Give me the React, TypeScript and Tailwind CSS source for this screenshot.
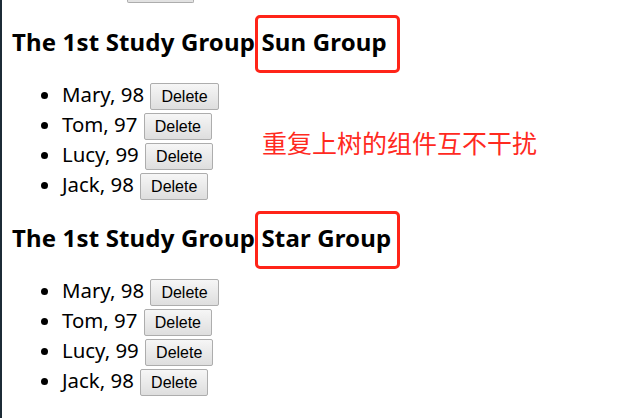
import React from 'react';

type Student = { name: string; score: number };

const students: Student[] = [
  { name: 'Mary', score: 98 },
  { name: 'Tom', score: 97 },
  { name: 'Lucy', score: 99 },
  { name: 'Jack', score: 98 },
];

function DeleteButton() {
  return (
    <button className="inline-block h-[27px] ml-[1px] px-[10px] align-middle border border-[#adadad] rounded-[2px] bg-gradient-to-b from-[#f6f6f6] to-[#dedede] text-[16px] leading-[25px] text-black font-['Liberation_Sans',Arial,sans-serif]">
      Delete
    </button>
  );
}

function StudyGroup({ name }: { name: string }) {
  return (
    <div>
      <h2 className="text-[24px] leading-[36px] font-bold tracking-[0.15px] text-black">
        The 1st Study Group{' '}
        <span className="relative">
          {name}
          {/* annotation box */}
          <span className="absolute left-[-6px] top-[-10px] w-[145px] h-[58px] border-[3px] border-[#ff2418] rounded-[5px]"></span>
        </span>
      </h2>
      <ul className="list-disc pl-[50px] mt-[19px] text-[20.4px] leading-[30px] text-black">
        {students.map((s) => (
          <li key={s.name} className="h-[30px]">
            {s.name}, {s.score} <DeleteButton />
          </li>
        ))}
      </ul>
    </div>
  );
}

export default function App() {
  return (
    <div className="relative w-[620px] h-[418px] overflow-hidden bg-white border-l-2 border-[#1c2b36] pl-[10px] font-['Noto_Sans',sans-serif]">
      {/* bottom edge of a button scrolled off the top */}
      <div className="ml-[115px] w-[67px] h-[3px] border-x border-b border-[#adadad] bg-[#e2e2e2] rounded-b-[2px]"></div>

      <div className="mt-[21px]">
        <StudyGroup name="Sun Group" />
      </div>
      <div className="mt-[21px]">
        <StudyGroup name="Star Group" />
      </div>

      <p className="absolute left-[260px] top-[127px] text-[25px] leading-[30px] text-[#ff2a1f] font-['Noto_Sans_CJK_SC',sans-serif]">
        重复上树的组件互不干扰
      </p>
    </div>
  );
}
